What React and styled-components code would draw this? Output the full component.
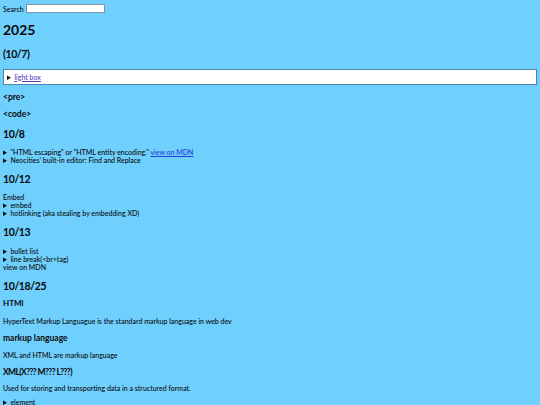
import React from "react";
import styled, { createGlobalStyle } from "styled-components";

const Global = createGlobalStyle`
  html, body { margin: 0; padding: 0; background: #6fcffd; }
  body { font-family: Lato, "DejaVu Sans", sans-serif; color: #0a0a0a; }
`;

const Page = styled.div`
  padding: 4px 3px 0 3px;
  font-size: 7px;
  line-height: 8px;
  font-weight: 500;
`;

const SearchRow = styled.div`
  display: flex;
  align-items: center;
  gap: 2px;
  height: 9px;
  font-size: 7px;
`;

const SearchInput = styled.input`
  box-sizing: border-box;
  width: 79px;
  height: 9px;
  margin: 0;
  padding: 0;
  border: 1px solid #7d97a8;
  background: #fff;
`;

const H1 = styled.h1`
  margin: ${(p) => p.$mt}px 0 0;
  font-size: 14px;
  line-height: 16px;
  font-weight: 700;
`;

const H2 = styled.h2`
  margin: ${(p) => p.$mt}px 0 0;
  font-size: 10.5px;
  line-height: 14px;
  font-weight: 700;
  letter-spacing: -0.4px;
`;

const H3 = styled.h3`
  margin: ${(p) => p.$mt}px 0 0;
  font-size: ${(p) => p.$fs || 8}px;
  line-height: 10px;
  font-weight: 700;
  letter-spacing: ${(p) => p.$ls || 0}px;
`;

const P = styled.p`
  margin: ${(p) => p.$mt}px 0 0;
`;

const Block = styled.div`
  margin-top: ${(p) => p.$mt}px;
`;

const Box = styled.details`
  box-sizing: border-box;
  margin-top: 8px;
  height: 16px;
  background: #fff;
  border: 1px solid #4f86a6;
  padding: 3px 3px;
`;

const Summary = styled.summary`
  font-size: 7px;
  line-height: 8px;
  cursor: pointer;
`;

const Item = styled.details`
  font-size: 7px;
  line-height: 8px;
`;

const Link = styled.a`
  color: ${(p) => (p.$visited ? "#5a3cc6" : "#1f3fd6")};
  text-decoration: underline;
`;

export default function App() {
  return (
    <>
      <Global />
      <Page>
        <SearchRow>
          <span>Search</span>
          <SearchInput />
        </SearchRow>
        <H1 $mt={9}>2025</H1>
        <H2 $mt={8.5}>(10/7)</H2>
        <Box>
          <Summary>
            <Link $visited href="#">light box</Link>
          </Summary>
        </Box>
        <H3 $mt={7.5} $fs={8.5}>&lt;pre&gt;</H3>
        <H3 $mt={7} $fs={8.5}>&lt;code&gt;</H3>
        <H2 $mt={7.5}>10/8</H2>
        <Block $mt={7.5}>
          <Item>
            <summary>
              "HTML escaping" or "HTML entity encoding." <Link href="#">view on MDN</Link>
            </summary>
          </Item>
          <Item>
            <summary>Neocities' built-in editor: Find and Replace</summary>
          </Item>
        </Block>
        <H2 $mt={8}>10/12</H2>
        <Block $mt={7}>
          <div>Embed</div>
          <Item>
            <summary>embed</summary>
          </Item>
          <Item>
            <summary>hotlinking (aka stealing by embedding XD)</summary>
          </Item>
        </Block>
        <H2 $mt={8}>10/13</H2>
        <Block $mt={8}>
          <Item>
            <summary>bullet list</summary>
          </Item>
          <Item>
            <summary>line break(&lt;br&gt;tag)</summary>
          </Item>
          <div>view on MDN</div>
        </Block>
        <H2 $mt={7.5}>10/18/25</H2>
        <H3 $mt={5.5}>HTMl</H3>
        <P $mt={9}>HyperText Markup Languague is the standard markup language in web dev</P>
        <H3 $mt={8} $fs={8.5}>markup language</H3>
        <P $mt={8}>XML and HTML are markup language</P>
        <H3 $mt={8} $fs={8.5} $ls={-0.6}>XML(X??? M??? L???)</H3>
        <P $mt={7}>Used for storing and transporting data in a structured format.</P>
        <Block $mt={6}>
          <Item>
            <summary>element</summary>
          </Item>
        </Block>
      </Page>
    </>
  );
}
